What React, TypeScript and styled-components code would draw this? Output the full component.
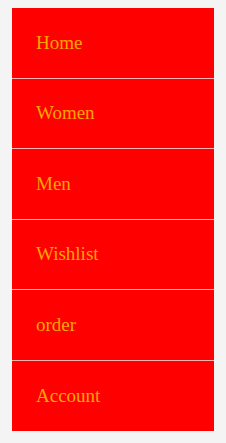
import React from 'react';
import styled, { createGlobalStyle } from 'styled-components';

const GlobalStyle = createGlobalStyle`
    html, body {
        margin: 0;
        background: #f4f4f4;
    }
    body {
        padding: 8px 12px;
    }
`;

const Menu = styled.ul`
    list-style: none;
    margin: 0;
    padding: 0;
    width: 202px;
    background: #ff0000;
`;

const Item = styled.li`
    display: flex;
    align-items: center;
    height: 70.5px;
    box-sizing: border-box;
    padding: 0 24px;
    border-bottom: 1px solid #ffb3b3;

    &:last-child {
        border-bottom: none;
    }
`;

const Link = styled.a`
    color: #ffa500;
    font-family: "Liberation Serif", "DejaVu Serif", serif;
    font-size: 19px;
    text-decoration: none;
    cursor: pointer;
`;

const links = ['Home', 'Women', 'Men', 'Wishlist', 'order', 'Account'];

const App = (): JSX.Element => (
    <>
        <GlobalStyle />
        <Menu>
            {links.map((label) => (
                <Item key={label}>
                    <Link>{label}</Link>
                </Item>
            ))}
        </Menu>
    </>
);

export default App;
